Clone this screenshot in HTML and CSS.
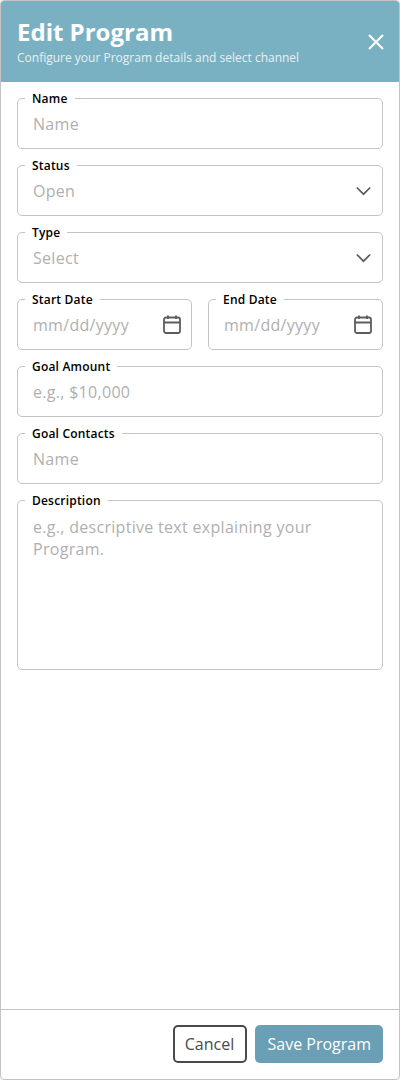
FILE: index.html
```html
<!DOCTYPE html>
<html lang="en">
<head>
    <meta charset="UTF-8">
    <meta name="viewport" content="width=device-width, initial-scale=1.0">
    <title>Edit Program</title>
    <link rel="stylesheet" href="styles.css">
</head>
<body>
    <div class="panel">
        <div class="panel-header">
            <div>
                <h1>Edit Program</h1>
                <p>Configure your Program details and select channel</p>
            </div>
            <svg class="close-icon" width="24" height="24" viewBox="0 0 24 24"><path d="M5 5L19 19M19 5L5 19"/></svg>
        </div>

        <div class="panel-form">
            <div class="field">
                <span class="field-label">Name</span>
                <span class="placeholder">Name</span>
            </div>
            <div class="field">
                <span class="field-label">Status</span>
                <span class="placeholder">Open</span>
                <svg class="chevron" width="15" height="10" viewBox="0 0 15 10"><path d="M0.8 1.5L7.5 8.2L14.2 1.5"/></svg>
            </div>
            <div class="field">
                <span class="field-label">Type</span>
                <span class="placeholder">Select</span>
                <svg class="chevron" width="15" height="10" viewBox="0 0 15 10"><path d="M0.8 1.5L7.5 8.2L14.2 1.5"/></svg>
            </div>
            <div class="date-row">
                <div class="field">
                    <span class="field-label">Start Date</span>
                    <span class="placeholder">mm/dd/yyyy</span>
                    <svg class="calendar" width="18" height="19" viewBox="0 0 18 19"><rect x="1" y="2.5" width="16" height="15.5" rx="2"/><path d="M1 7.5H17M5 0.5V4M13 0.5V4"/></svg>
                </div>
                <div class="field">
                    <span class="field-label">End Date</span>
                    <span class="placeholder">mm/dd/yyyy</span>
                    <svg class="calendar" width="18" height="19" viewBox="0 0 18 19"><rect x="1" y="2.5" width="16" height="15.5" rx="2"/><path d="M1 7.5H17M5 0.5V4M13 0.5V4"/></svg>
                </div>
            </div>
            <div class="field">
                <span class="field-label">Goal Amount</span>
                <span class="placeholder">e.g., $10,000</span>
            </div>
            <div class="field">
                <span class="field-label">Goal Contacts</span>
                <span class="placeholder">Name</span>
            </div>
            <div class="field field-textarea">
                <span class="field-label">Description</span>
                <span class="placeholder">e.g., descriptive text explaining your Program.</span>
            </div>
        </div>

        <div class="panel-footer">
            <button class="btn btn-cancel">Cancel</button>
            <button class="btn btn-save">Save Program</button>
        </div>
    </div>
</body>
</html>
```

FILE: styles.css
```css
body {
    margin: 0;
    background-color: #ffffff;
    font-family: "Open Sans", sans-serif;
}
.panel {
    display: flex;
    flex-direction: column;
    box-sizing: border-box;
    height: 1080px;
    border: 1px solid #c4c4c4;
    border-radius: 4px;
    overflow: hidden;
}
.panel-header {
    display: flex;
    align-items: center;
    justify-content: space-between;
    height: 81px;
    box-sizing: border-box;
    padding: 0 4px 0 16px;
    background-color: #7ab1c2;
    color: #ffffff;
}
.panel-header h1 {
    margin: 0;
    font-size: 24px;
    line-height: 30px;
    font-weight: 700;
}
.panel-header p {
    margin: 3px 0 0;
    font-size: 12px;
    line-height: 16px;
    color: #e6f0f3;
}
.close-icon {
    margin-right: 7px;
}
.close-icon path {
    fill: none;
    stroke: #ffffff;
    stroke-width: 2;
}
.panel-form {
    flex: 1;
    display: flex;
    flex-direction: column;
    gap: 16px;
    padding: 16px 16px 0;
}
.date-row {
    display: flex;
    gap: 16px;
}
.date-row .field {
    flex: 1;
}
.field {
    position: relative;
    display: flex;
    align-items: center;
    justify-content: space-between;
    box-sizing: border-box;
    height: 51px;
    padding: 0 10px 0 15px;
    border: 1px solid #c4c4c4;
    border-radius: 5px;
}
.field-label {
    position: absolute;
    top: -8px;
    left: 7px;
    padding: 0 7px;
    background-color: #ffffff;
    color: #000000;
    font-size: 12px;
    line-height: 16px;
    font-weight: 600;
    letter-spacing: 0.2px;
}
.placeholder {
    color: #b0b0b0;
    font-size: 16px;
    line-height: 22px;
    letter-spacing: 0.3px;
}
.chevron {
    margin-right: 1px;
}
.chevron path {
    fill: none;
    stroke: #5c5c5c;
    stroke-width: 1.7;
}
.calendar {
    flex-shrink: 0;
}
.calendar rect,
.calendar path {
    fill: none;
    stroke: #5c5c5c;
    stroke-width: 1.8;
}
.field-textarea {
    height: 170px;
    align-items: flex-start;
    padding-top: 15px;
}
.panel-footer {
    display: flex;
    justify-content: flex-end;
    gap: 8px;
    height: 70px;
    box-sizing: border-box;
    padding: 15px 16px 0;
    border-top: 1px solid #c4c4c4;
}
.btn {
    height: 38px;
    padding: 0 12px;
    border-radius: 5px;
    font-family: "Open Sans", sans-serif;
    font-size: 16px;
    cursor: pointer;
}
.btn-cancel {
    width: 74px;
    padding: 0 2px 0 0;
    background-color: #ffffff;
    border: 2px solid #4a4a4a;
    color: #4a4a4a;
}
.btn-save {
    background-color: #6a9fb5;
    border: none;
    color: #ffffff;
}
```
